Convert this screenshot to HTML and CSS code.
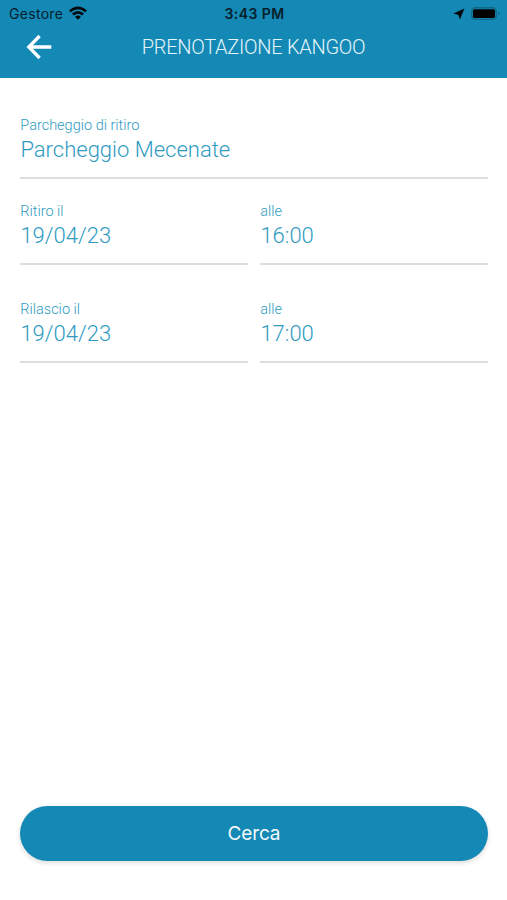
FILE: index.html
```html
<!DOCTYPE html>
<html lang="it">
<head>
<meta charset="utf-8">
<title>Prenotazione Kangoo</title>
<link rel="stylesheet" href="styles.css">
</head>
<body>
<header class="header">
  <div class="status">
    <div class="carrier"><span>Gestore</span>
      <svg class="wifi" viewBox="0 0 18 14"><path d="M0 4.4Q9-3.4 18 4.4L16.2 6.3Q9 .2 1.8 6.3ZM3 7.6Q9 2.6 15 7.6L13.1 9.5Q9 6.2 4.9 9.5ZM6.1 10.8Q9 8.4 11.9 10.8L9 13.7Z"/></svg>
    </div>
    <div class="clock">3:43 PM</div>
    <div class="indicators">
      <svg class="location" viewBox="0 0 12 12"><path d="M11.4.6 6.9 11.6 5.4 6.9.4 5.6Z"/></svg>
      <svg class="battery" viewBox="0 0 29 13"><rect class="case" x=".8" y=".8" width="24.4" height="11.6" rx="3.5"/><rect x="2" y="2.2" width="22" height="8.8" rx="1.6"/><path class="cap" d="M27 4.5Q30 6.5 27 8.5Z"/></svg>
    </div>
  </div>
  <div class="nav">
    <svg class="back" viewBox="0 0 26 26"><path d="M25.3 13H3M13.6 2 2.8 13 13.6 24"/></svg>
    <h1 class="title">PRENOTAZIONE KANGOO</h1>
  </div>
</header>
<main class="form">
  <div class="field pickup"><div class="label">Parcheggio di ritiro</div><div class="value">Parcheggio Mecenate</div></div>
  <div class="row start">
    <div class="field"><div class="label">Ritiro il</div><div class="value">19/04/23</div></div>
    <div class="field"><div class="label">alle</div><div class="value">16:00</div></div>
  </div>
  <div class="row">
    <div class="field"><div class="label">Rilascio il</div><div class="value">19/04/23</div></div>
    <div class="field"><div class="label">alle</div><div class="value">17:00</div></div>
  </div>
  <button class="search">Cerca</button>
</main>
</body>
</html>
```
FILE: styles.css
```css
* { box-sizing: border-box; }
body { margin: 0; height: 900px; display: flex; flex-direction: column; background: #fff; font-family: Roboto, sans-serif; overflow: hidden; }
.header { height: 78px; background: #1489b5; flex: none; }
.status { height: 27px; padding: 0 7px 0 9px; display: grid; grid-template-columns: 1fr auto 1fr; align-items: center; font: 14px/27px Inter, sans-serif; color: #06202b; }
.carrier, .indicators { display: flex; align-items: center; }
.carrier { gap: 6px; letter-spacing: .3px; }
.indicators { justify-content: flex-end; gap: 6px; }
.clock { font-weight: 600; letter-spacing: .45px; }
.wifi { width: 18px; height: 14px; fill: #02090c; margin-top: -1px; }
.location { width: 12px; height: 12px; fill: #02090c; }
.battery { width: 29px; height: 13px; margin-top: -1px; }
.case { fill: none; stroke: #0f698a; stroke-width: 1.5; }
.cap { fill: #0f698a; }
.nav { height: 40px; display: grid; grid-template-columns: 52px 1fr 52px; align-items: center; }
.back { width: 26px; height: 26px; margin-left: 26px; fill: none; stroke: #fff; stroke-width: 3.3; }
.title { margin: 0; text-align: center; font-size: 20px; font-weight: 300; letter-spacing: -.28px; color: #e4f5fa; }
.form { flex: 1; display: flex; flex-direction: column; padding: 37px 19px 39px 20px; }
.field { height: 64px; border-bottom: 2px solid #dedede; color: #2f9bc1; font-weight: 300; }
.label { padding-left: .3px; padding-top: 1px; font-size: 14.5px; line-height: 20px; }
.value { padding-left: .4px; font-size: 22px; line-height: 28px; }
.pickup { margin-bottom: 22px; }
.row { display: grid; grid-template-columns: 1fr 1fr; gap: 12px; }
.start { margin-bottom: 34px; }
.search { margin-top: auto; height: 55px; border: 0; border-radius: 28px; background: #1489b5; color: #f2fafc; font: 19px Inter, sans-serif; letter-spacing: -.15px; box-shadow: 0 2px 5px rgba(0,0,0,.14); }
```
